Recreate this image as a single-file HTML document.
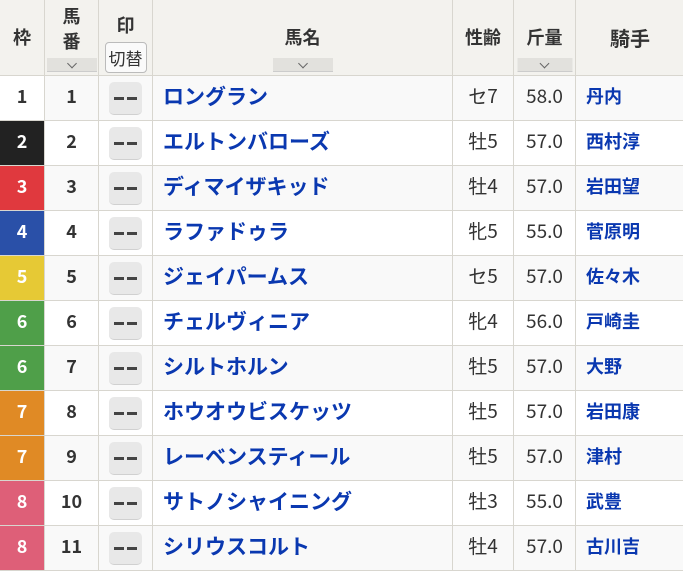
<!DOCTYPE html>
<html><head><meta charset="utf-8"><style>
*{margin:0;padding:0;box-sizing:border-box}
body{width:683px;height:569px;overflow:hidden;background:#fff;font-family:"Noto Sans CJK JP","Liberation Sans",sans-serif}
table{border-collapse:collapse;table-layout:fixed;width:684px;margin-top:-1px;margin-left:-1px}
th,td{border:1px solid #d8d6cf;text-align:center;padding:0;line-height:1.2}
th{background:#f3f2ee;color:#333;font-size:18px;font-weight:bold;height:76px;position:relative;vertical-align:middle}
td{height:45px;font-size:19px;color:#333;vertical-align:middle;padding-bottom:3px}
tr:nth-child(even) td{background:#f9f9f9}
.w{font-weight:bold;font-size:18px}
.sort{position:absolute;left:50%;transform:translateX(-50%);bottom:3px;height:14px;background:#e2e1dd;border-bottom:1px solid #ccc;width:50px}
.sort::after{content:"";position:absolute;left:50%;top:2px;width:6px;height:6px;border-right:1px solid #666;border-bottom:1px solid #666;transform:translateX(-50%) rotate(45deg)}
.btn{display:inline-block;width:33px;height:33px;background:#e8e8e8;border-radius:5px;border-bottom:1px solid #d0d0d0;position:relative;vertical-align:middle;margin-top:3px}
.btn::before,.btn::after{content:"";position:absolute;top:15px;width:10px;height:3px;background:#444}
.btn::before{left:5px}.btn::after{left:18px}
.name{text-align:left;padding-left:10px;color:#0a38b0;font-weight:bold;font-size:21px}
.jk{text-align:left;padding-left:10px;color:#0a38b0;font-weight:bold;font-size:18px}
.sw{position:absolute;left:50%;transform:translateX(-50%);top:42px;border:1px solid #bbb;border-radius:4px;font-weight:normal;font-size:17px;padding:0 3px;background:#fafafa;line-height:29px;white-space:nowrap}
</style></head><body>
<table>
<colgroup><col style="width:45px"><col style="width:54px"><col style="width:54px"><col style="width:300px"><col style="width:61px"><col style="width:62px"><col style="width:109px"></colgroup>
<tr><th>枠</th><th><div style="line-height:25px;margin-top:-18px">馬<br>番</div><div class="sort"></div></th><th><div style="position:absolute;left:0;right:0;top:15px">印</div><div class="sw">切替</div></th><th>馬名<div class="sort" style="width:60px"></div></th><th>性齢</th><th>斤量<div class="sort" style="width:55px"></div></th><th style="font-size:20px">騎手</th></tr>
<tr><td class="w" style="background:#fff">1</td><td class="w">1</td><td><span class="btn"></span></td><td class="name">ロングラン</td><td>セ7</td><td>58.0</td><td class="jk">丹内</td></tr>
<tr><td class="w" style="background:#222;color:#fff">2</td><td class="w">2</td><td><span class="btn"></span></td><td class="name">エルトンバローズ</td><td>牡5</td><td>57.0</td><td class="jk">西村淳</td></tr>
<tr><td class="w" style="background:#e0393e;color:#fff">3</td><td class="w">3</td><td><span class="btn"></span></td><td class="name">ディマイザキッド</td><td>牡4</td><td>57.0</td><td class="jk">岩田望</td></tr>
<tr><td class="w" style="background:#2a50a8;color:#fff">4</td><td class="w">4</td><td><span class="btn"></span></td><td class="name">ラファドゥラ</td><td>牝5</td><td>55.0</td><td class="jk">菅原明</td></tr>
<tr><td class="w" style="background:#e6c935;color:#fff">5</td><td class="w">5</td><td><span class="btn"></span></td><td class="name">ジェイパームス</td><td>セ5</td><td>57.0</td><td class="jk">佐々木</td></tr>
<tr><td class="w" style="background:#4f9f49;color:#fff">6</td><td class="w">6</td><td><span class="btn"></span></td><td class="name">チェルヴィニア</td><td>牝4</td><td>56.0</td><td class="jk">戸崎圭</td></tr>
<tr><td class="w" style="background:#4f9f49;color:#fff">6</td><td class="w">7</td><td><span class="btn"></span></td><td class="name">シルトホルン</td><td>牡5</td><td>57.0</td><td class="jk">大野</td></tr>
<tr><td class="w" style="background:#e08a25;color:#fff">7</td><td class="w">8</td><td><span class="btn"></span></td><td class="name">ホウオウビスケッツ</td><td>牡5</td><td>57.0</td><td class="jk">岩田康</td></tr>
<tr><td class="w" style="background:#e08a25;color:#fff">7</td><td class="w">9</td><td><span class="btn"></span></td><td class="name">レーベンスティール</td><td>牡5</td><td>57.0</td><td class="jk">津村</td></tr>
<tr><td class="w" style="background:#de5f78;color:#fff">8</td><td class="w">10</td><td><span class="btn"></span></td><td class="name">サトノシャイニング</td><td>牡3</td><td>55.0</td><td class="jk">武豊</td></tr>
<tr><td class="w" style="background:#de5f78;color:#fff">8</td><td class="w">11</td><td><span class="btn"></span></td><td class="name">シリウスコルト</td><td>牡4</td><td>57.0</td><td class="jk">古川吉</td></tr>
</table>
</body></html>
